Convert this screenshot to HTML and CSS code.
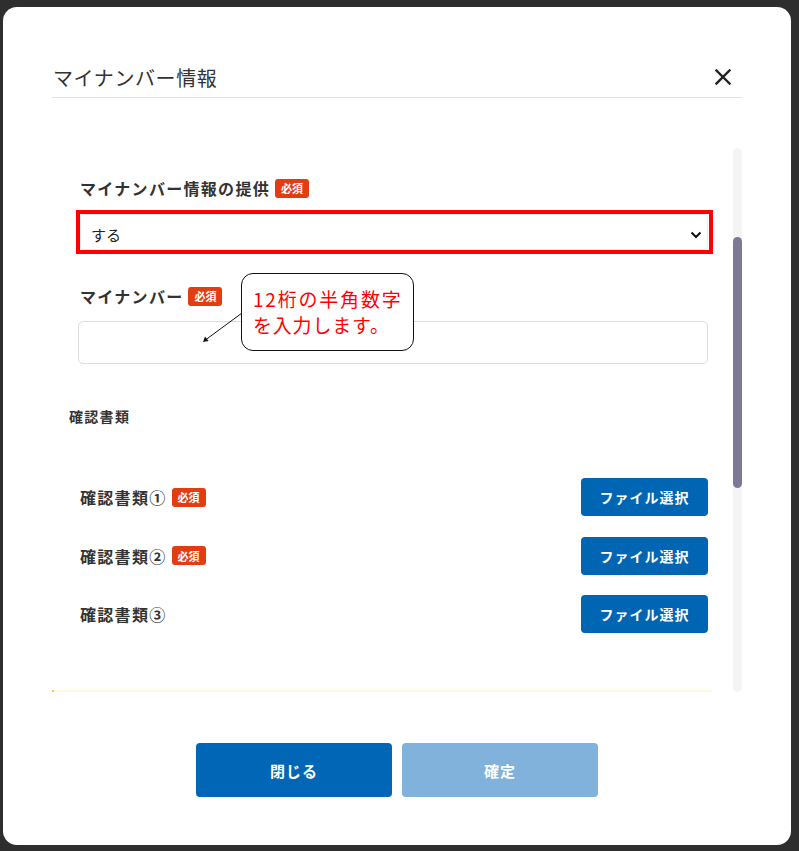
FILE: index.html
```html
<!DOCTYPE html>
<html lang="ja">
<head>
    <meta charset="UTF-8">
    <meta name="viewport" content="width=device-width, initial-scale=1.0">
    <title>マイナンバー情報</title>
    <link rel="stylesheet" href="styles.css">
</head>
<body>
    <div class="modal">
        <div class="modal-header">
            <h2 class="modal-title">マイナンバー情報</h2>
            <button type="button" class="close-button" aria-label="閉じる">
                <svg width="16" height="16" viewBox="0 0 16 16">
                    <path d="M1.5 1.5 L14.5 14.5 M14.5 1.5 L1.5 14.5" stroke="#222" stroke-width="2.4" stroke-linecap="square" fill="none"/>
                </svg>
            </button>
        </div>

        <div class="modal-body">
            <div class="form-area">
                <div class="field">
                    <div class="field-label">
                        <span>マイナンバー情報の提供</span>
                        <span class="required-badge">必須</span>
                    </div>
                    <div class="select-highlight">
                        <div class="select-box">
                            <span>する</span>
                            <svg width="12" height="8" viewBox="0 0 12 8">
                                <path d="M1.5 1.5 L6 6 L10.5 1.5" stroke="#111" stroke-width="2" fill="none"/>
                            </svg>
                        </div>
                    </div>
                </div>

                <div class="field field-number">
                    <div class="field-label">
                        <span>マイナンバー</span>
                        <span class="required-badge">必須</span>
                    </div>
                    <input type="text" class="text-input" name="my_number">

                    <!-- hint bubble pointing at the number input -->
                    <svg class="hint-arrow" width="46" height="36" viewBox="0 0 46 36">
                        <line x1="42" y1="3" x2="6" y2="29.5" stroke="#111" stroke-width="1"/>
                        <path d="M3 32 L5 26.5 L8.5 31 Z" fill="#111"/>
                    </svg>
                    <div class="hint-bubble">
                        <span class="hint-line hint-line-wide">12桁の半角数字</span>
                        <span class="hint-line hint-line-narrow">を入力します。</span>
                    </div>
                </div>

                <h3 class="section-title">確認書類</h3>

                <div class="doc-list">
                    <div class="doc-row">
                        <div class="field-label">
                            <span>確認書類①</span>
                            <span class="required-badge">必須</span>
                        </div>
                        <button type="button" class="file-button">ファイル選択</button>
                    </div>
                    <div class="doc-row">
                        <div class="field-label">
                            <span>確認書類②</span>
                            <span class="required-badge">必須</span>
                        </div>
                        <button type="button" class="file-button">ファイル選択</button>
                    </div>
                    <div class="doc-row">
                        <div class="field-label">
                            <span>確認書類③</span>
                        </div>
                        <button type="button" class="file-button">ファイル選択</button>
                    </div>
                </div>

                <div class="notice-edge"></div>
            </div>

            <div class="scrollbar">
                <div class="scrollbar-thumb"></div>
            </div>
        </div>

        <div class="modal-footer">
            <button type="button" class="footer-button">閉じる</button>
            <button type="button" class="footer-button footer-button-disabled">確定</button>
        </div>
    </div>
</body>
</html>
```

FILE: styles.css
```css
body {
    font-family: "Noto Sans CJK JP", "Noto Sans", sans-serif;
    margin: 0;
    padding: 0;
    height: 851px;
    overflow: hidden;
    background-color: #2e2e2e;
    color: #333;
}
.modal {
    box-sizing: border-box;
    width: 788px;
    height: 838px;
    margin: 7px 0 0 3px;
    padding: 0 49px;
    background: #ffffff;
    border-radius: 14px;
    display: flex;
    flex-direction: column;
}

/* header */
.modal-header {
    display: flex;
    align-items: center;
    justify-content: space-between;
    padding: 57px 11px 5px 1px;
    border-bottom: 1px solid #e4e4e4;
}
.modal-title {
    margin: 0;
    font-size: 20px;
    line-height: 28px;
    font-weight: 400;
    letter-spacing: 0.6px;
    color: #333;
}
.close-button {
    border: none;
    background: none;
    padding: 0;
    width: 16px;
    height: 16px;
    margin-top: -2px;
    cursor: pointer;
}
.close-button svg {
    display: block;
}

/* body with its own scrollbar */
.modal-body {
    display: flex;
    gap: 21px;
    height: 544px;
    margin-top: 50px;
}
.form-area {
    width: 660px;
    display: flex;
    flex-direction: column;
    padding: 30px 4px 0 28px;
    box-sizing: border-box;
}
.scrollbar {
    width: 9px;
    height: 544px;
    background-color: #f4f4f6;
    border-radius: 5px;
}
.scrollbar-thumb {
    margin-top: 89px;
    height: 251px;
    background-color: #7b7a92;
    border-radius: 5px;
}

.field-label {
    display: flex;
    align-items: center;
    gap: 5px;
    height: 20px;
    font-size: 16px;
    font-weight: 700;
    letter-spacing: 1.3px;
    color: #333;
}
.required-badge {
    display: inline-flex;
    align-items: center;
    justify-content: center;
    width: 34px;
    height: 19px;
    border-radius: 3px;
    background-color: #e23d10;
    color: #fff;
    font-size: 11px;
    font-weight: 700;
    letter-spacing: 0;
}

.select-highlight {
    margin: 12px -5px 0 -4px;
    border: 4px solid #ff0000;
    padding-right: 1px;
}
.select-box {
    display: flex;
    align-items: center;
    justify-content: space-between;
    height: 36px;
    box-sizing: border-box;
    padding: 5px 5px 0 10px;
    border: 1px solid #ececec;
    border-radius: 4px;
    font-size: 15px;
    color: #222;
}
.select-box svg {
    display: block;
}

.field-number {
    position: relative;
    margin-top: 32px;
}
.text-input {
    display: block;
    box-sizing: border-box;
    width: 630px;
    height: 43px;
    margin: 15px 0 0 -2px;
    border: 1px solid #dcdcdc;
    border-radius: 5px;
    background: #fff;
}
.hint-arrow {
    position: absolute;
    left: 120px;
    top: 24px;
}
.hint-bubble {
    position: absolute;
    left: 161px;
    top: -13px;
    box-sizing: border-box;
    width: 173px;
    height: 78px;
    padding: 12px 0 0 11px;
    border: 1px solid #111;
    border-radius: 12px;
    background: #fff;
    color: #ff0000;
    font-size: 19px;
    line-height: 26px;
}
.hint-line {
    display: block;
    white-space: nowrap;
}
.hint-line-wide {
    letter-spacing: 1.8px;
}
.hint-line-narrow {
    letter-spacing: 0.8px;
}

.section-title {
    margin: 42px 0 0 -11px;
    font-size: 14px;
    line-height: 20px;
    font-weight: 700;
    letter-spacing: 1.3px;
    color: #333;
}

.doc-list {
    display: flex;
    flex-direction: column;
    gap: 20.5px;
    margin-top: 52px;
}
.doc-row {
    display: flex;
    align-items: center;
    justify-content: space-between;
}
.file-button {
    width: 127px;
    height: 38px;
    border: none;
    border-radius: 4px;
    background-color: #0066b3;
    color: #fff;
    font-family: inherit;
    font-size: 14px;
    font-weight: 700;
    letter-spacing: 1px;
    cursor: pointer;
}

.notice-edge {
    margin: auto -4px 0 -28px;
    height: 2px;
    background-color: #fff7df;
    border-left: 2px solid #f5c84a;
}

/* footer */
.modal-footer {
    display: flex;
    justify-content: center;
    gap: 10px;
    margin-top: 51px;
}
.footer-button {
    width: 196px;
    height: 54px;
    border: none;
    border-radius: 4px;
    background-color: #0266b6;
    color: #fff;
    font-family: inherit;
    font-size: 15px;
    font-weight: 700;
    letter-spacing: 1px;
    cursor: pointer;
}
.footer-button-disabled {
    background-color: #80b2db;
    cursor: default;
}
```
